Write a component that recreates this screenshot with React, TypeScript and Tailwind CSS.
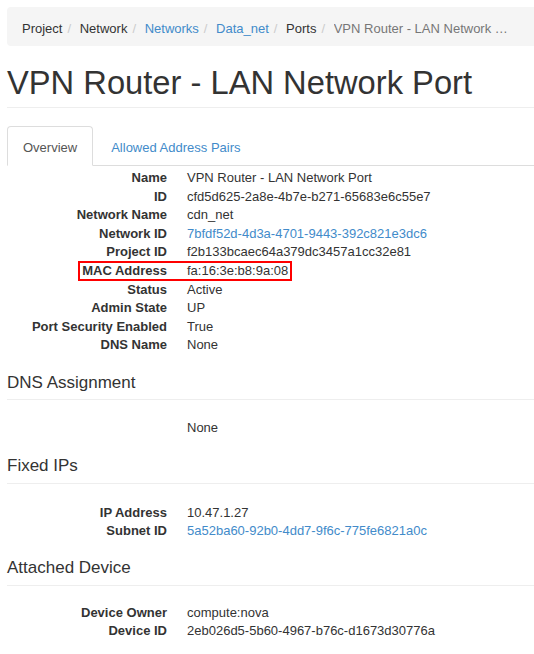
type Row = {
  label: string;
  value: string;
  link?: boolean;
  marked?: boolean;
};

const overview: Row[] = [
  { label: "Name", value: "VPN Router - LAN Network Port" },
  { label: "ID", value: "cfd5d625-2a8e-4b7e-b271-65683e6c55e7" },
  { label: "Network Name", value: "cdn_net" },
  { label: "Network ID", value: "7bfdf52d-4d3a-4701-9443-392c821e3dc6", link: true },
  { label: "Project ID", value: "f2b133bcaec64a379dc3457a1cc32e81" },
  { label: "MAC Address", value: "fa:16:3e:b8:9a:08", marked: true },
  { label: "Status", value: "Active" },
  { label: "Admin State", value: "UP" },
  { label: "Port Security Enabled", value: "True" },
  { label: "DNS Name", value: "None" },
];

const sections: { title: string; top: string; gap: string; rows: Row[] }[] = [
  { title: "DNS Assignment", top: "mt-[19px]", gap: "mt-[19px]", rows: [{ label: "", value: "None" }] },
  {
    title: "Fixed IPs",
    top: "mt-[19px]",
    gap: "mt-[20px]",
    rows: [
      { label: "IP Address", value: "10.47.1.27" },
      { label: "Subnet ID", value: "5a52ba60-92b0-4dd7-9f6c-775fe6821a0c", link: true },
    ],
  },
  {
    title: "Attached Device",
    top: "mt-[18px]",
    gap: "mt-[18px]",
    rows: [
      { label: "Device Owner", value: "compute:nova" },
      { label: "Device ID", value: "2eb026d5-5b60-4967-b76c-d1673d30776a" },
    ],
  },
];

const crumbs = [
  { text: "Project" },
  { text: "Network" },
  { text: "Networks", link: true },
  { text: "Data_net", link: true },
  { text: "Ports" },
];

function DetailList({ rows }: { rows: Row[] }) {
  return (
    <dl className="grid grid-cols-[160px_1fr] gap-x-[20px]">
      {rows.map((r, i) => (
        <div key={i} className="relative col-span-2 grid grid-cols-subgrid">
          <dt className="text-right font-bold whitespace-nowrap">{r.label}</dt>
          <dd className={r.link ? "text-[#428bca] whitespace-nowrap" : "whitespace-nowrap"}>{r.value}</dd>
          {r.marked && (
            <span className="absolute left-[71px] top-[-1px] h-[20px] w-[214px] border-2 border-[#f00]" />
          )}
        </div>
      ))}
    </dl>
  );
}

export default function App() {
  return (
    <div className="min-h-screen overflow-hidden bg-white pl-[7px] pt-[7px] font-['Liberation_Sans',Arial,sans-serif] text-[13px] leading-[18.57px] text-[#333]">
      <div className="w-[580px]">
        <ol className="flex items-center rounded-[4px] bg-[#f5f5f5] pb-[7px] pl-[15px] pt-[13px] whitespace-nowrap">
          {crumbs.map((c) => (
            <li key={c.text} className="flex">
              <span className={c.link ? "text-[#428bca]" : ""}>{c.text}</span>
              <span className="px-[5px] text-[#ccc]">/{"\u00a0"}</span>
            </li>
          ))}
          <li className="max-w-[176px] truncate text-[#777]">VPN Router - LAN Network Port</li>
        </ol>

        <div className="mt-[19px] border-b border-[#eee] pb-[6px]">
          <h1 className="text-[32.7px] leading-[36px] text-[#333]">VPN Router - LAN Network Port</h1>
        </div>

        <ul className="mt-[18px] flex border-b border-[#ddd]">
          <li className="-mb-px rounded-t-[4px] border border-[#ddd] border-b-white bg-white px-[15px] pb-[8px] pt-[12px] text-[#555]">
            Overview
          </li>
          <li className="-mb-px ml-[2px] border border-transparent px-[15px] pb-[8px] pt-[12px] text-[#428bca]">
            Allowed Address Pairs
          </li>
        </ul>

        <div className="mt-[3px]">
          <DetailList rows={overview} />
        </div>

        {sections.map((s) => (
          <div key={s.title} className={s.top}>
            <h4 className="border-b border-[#eee] pb-[7px] text-[17px] leading-[18.7px] text-[#333]">{s.title}</h4>
            <div className={s.gap}>
              <DetailList rows={s.rows} />
            </div>
          </div>
        ))}
      </div>
    </div>
  );
}
